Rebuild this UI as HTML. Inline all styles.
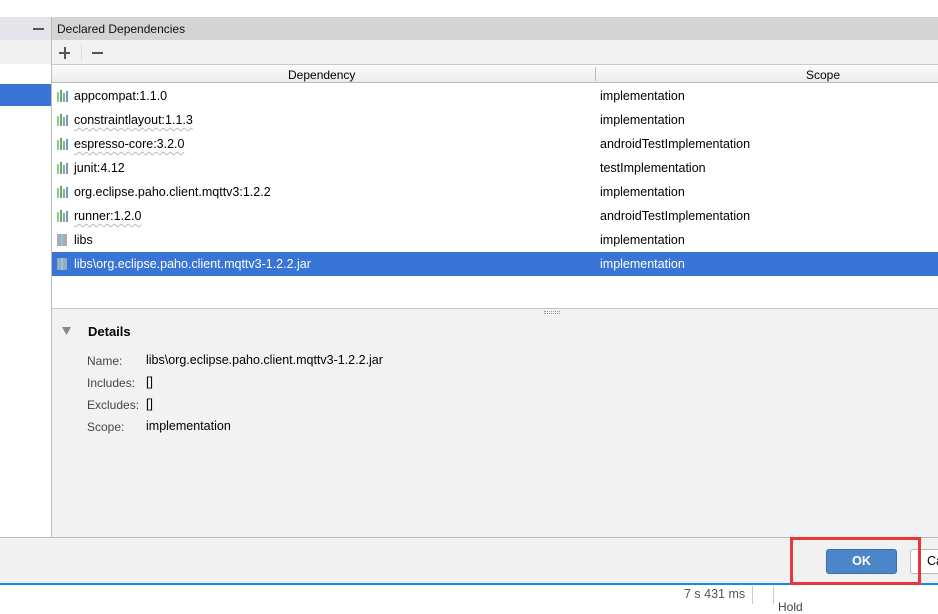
<!DOCTYPE html><html><head><style>
*{margin:0;padding:0;box-sizing:border-box}
body{width:938px;height:604px;position:relative;overflow:hidden;background:#fff;font-family:"Liberation Sans","Noto Sans CJK SC",sans-serif;font-size:12.5px;color:#000}
.a{position:absolute}
.row{position:absolute;left:52px;width:886px;height:24px;line-height:24px}
.row .n{position:absolute;left:22px}
.row .s{position:absolute;left:548px}
.ic{position:absolute;left:4px;top:6px;width:12px;height:12px}
.w{text-decoration:underline wavy #bbb 1px;text-underline-offset:3px}
.lbl{position:absolute;left:87px;color:#444;font-size:12px}
.val{position:absolute;left:146px;font-size:12.5px}
</style></head><body>
<div class="a" style="left:0;top:17px;width:51px;height:23px;background:#e3e5ea"></div>
<div class="a" style="left:33px;top:28px;width:11px;height:2px;background:#555"></div>
<div class="a" style="left:0;top:40px;width:51px;height:24px;background:#f0f0f0"></div>
<div class="a" style="left:0;top:84px;width:51px;height:22px;background:#3875d7"></div>
<div class="a" style="left:51px;top:17px;width:1px;height:520px;background:#bdbdbd"></div>
<div class="a" style="left:52px;top:17px;width:886px;height:23px;background:#d4d4d4;line-height:24px;padding-left:5px;font-size:12px;color:#111">Declared Dependencies</div>
<div class="a" style="left:52px;top:40px;width:886px;height:25px;background:#f2f2f2;border-bottom:1px solid #c8c8c8"></div>
<div class="a" style="left:59px;top:52px;width:11px;height:2px;background:#555"></div>
<div class="a" style="left:64px;top:47px;width:2px;height:12px;background:#555"></div>
<div class="a" style="left:81px;top:44px;width:1px;height:17px;background:#ddd"></div>
<div class="a" style="left:92px;top:52px;width:11px;height:2px;background:#555"></div>
<div class="a" style="left:52px;top:66px;width:886px;height:17px;background:linear-gradient(#fafafa,#ececec);border-bottom:1px solid #bbb;line-height:18px;font-size:12px">
<span class="a" style="left:236px">Dependency</span>
<span class="a" style="left:543px;top:1px;width:1px;height:14px;background:#bbb"></span>
<span class="a" style="left:754px">Scope</span></div>
<div class="row" style="top:84px"><svg class="ic"><rect x="1" y="2" width="2" height="10" fill="#8c8"/><rect x="4" y="0" width="2" height="12" fill="#6a6"/><rect x="7" y="3" width="2" height="9" fill="#8ab"/><rect x="10" y="1" width="2" height="11" fill="#79b"/></svg><span class="n">appcompat:1.1.0</span><span class="s">implementation</span></div>
<div class="row" style="top:108px"><svg class="ic"><rect x="1" y="2" width="2" height="10" fill="#8c8"/><rect x="4" y="0" width="2" height="12" fill="#6a6"/><rect x="7" y="3" width="2" height="9" fill="#8ab"/><rect x="10" y="1" width="2" height="11" fill="#79b"/></svg><span class="n w">constraintlayout:1.1.3</span><span class="s">implementation</span></div>
<div class="row" style="top:132px"><svg class="ic"><rect x="1" y="2" width="2" height="10" fill="#8c8"/><rect x="4" y="0" width="2" height="12" fill="#6a6"/><rect x="7" y="3" width="2" height="9" fill="#8ab"/><rect x="10" y="1" width="2" height="11" fill="#79b"/></svg><span class="n w">espresso-core:3.2.0</span><span class="s">androidTestImplementation</span></div>
<div class="row" style="top:156px"><svg class="ic"><rect x="1" y="2" width="2" height="10" fill="#8c8"/><rect x="4" y="0" width="2" height="12" fill="#6a6"/><rect x="7" y="3" width="2" height="9" fill="#8ab"/><rect x="10" y="1" width="2" height="11" fill="#79b"/></svg><span class="n">junit:4.12</span><span class="s">testImplementation</span></div>
<div class="row" style="top:180px"><svg class="ic"><rect x="1" y="2" width="2" height="10" fill="#8c8"/><rect x="4" y="0" width="2" height="12" fill="#6a6"/><rect x="7" y="3" width="2" height="9" fill="#8ab"/><rect x="10" y="1" width="2" height="11" fill="#79b"/></svg><span class="n">org.eclipse.paho.client.mqttv3:1.2.2</span><span class="s">implementation</span></div>
<div class="row" style="top:204px"><svg class="ic"><rect x="1" y="2" width="2" height="10" fill="#8c8"/><rect x="4" y="0" width="2" height="12" fill="#6a6"/><rect x="7" y="3" width="2" height="9" fill="#8ab"/><rect x="10" y="1" width="2" height="11" fill="#79b"/></svg><span class="n w">runner:1.2.0</span><span class="s">androidTestImplementation</span></div>
<div class="row" style="top:228px"><svg class="ic"><rect x="1" y="0" width="10" height="13" fill="#aab"/><rect x="5" y="0" width="2" height="13" fill="#8cd"/></svg><span class="n">libs</span><span class="s">implementation</span></div>
<div class="row" style="top:252px;background:#3875d7;color:#fff"><svg class="ic"><rect x="1" y="0" width="10" height="13" fill="#9ab"/><rect x="5" y="0" width="2" height="13" fill="#8cd"/></svg><span class="n">libs\org.eclipse.paho.client.mqttv3-1.2.2.jar</span><span class="s">implementation</span></div>
<div class="a" style="left:52px;top:308px;width:886px;height:229px;background:#f2f2f2;border-top:1px solid #c8c8c8"></div>
<div class="a" style="left:544px;top:311px;width:16px;height:3px;border-top:1px dotted #999;border-bottom:1px dotted #999"></div>
<svg class="a" style="left:62px;top:327px" width="10" height="9"><polygon points="0,0 9,0 4.5,8" fill="#888"/></svg>
<div class="a" style="left:88px;top:324px;font-weight:bold;font-size:13px">Details</div>
<div class="lbl" style="top:354px">Name:</div><div class="val" style="top:353px">libs\org.eclipse.paho.client.mqttv3-1.2.2.jar</div>
<div class="lbl" style="top:376px">Includes:</div><div class="val" style="top:375px">[]</div>
<div class="lbl" style="top:398px">Excludes:</div><div class="val" style="top:397px">[]</div>
<div class="lbl" style="top:420px">Scope:</div><div class="val" style="top:419px">implementation</div>
<div class="a" style="left:0;top:537px;width:938px;height:48px;background:#f1f1f1;border-top:1px solid #bbb;border-bottom:2px solid #1e88e5"></div>
<div class="a" style="left:826px;top:549px;width:71px;height:25px;background:#4a86c8;border:1px solid #3b6fad;border-radius:3px;color:#fff;font-weight:bold;text-align:center;line-height:23px;font-size:12.5px">OK</div>
<div class="a" style="left:910px;top:549px;width:40px;height:25px;background:#fff;border:1px solid #bbb;border-radius:3px;line-height:23px;padding-left:16px;font-size:12.5px">Ca</div>
<div class="a" style="left:790px;top:537px;width:131px;height:48px;border:3px solid #e8363a"></div>
<div class="a" style="left:684px;top:587px;color:#555;font-size:12.5px">7 s 431 ms</div>
<div class="a" style="left:752px;top:586px;width:1px;height:18px;background:#ccc"></div>
<div class="a" style="left:773px;top:586px;width:1px;height:18px;background:#ccc"></div>
<div class="a" style="left:778px;top:600px;font-size:12px;color:#444">Hold</div>
</body></html>
